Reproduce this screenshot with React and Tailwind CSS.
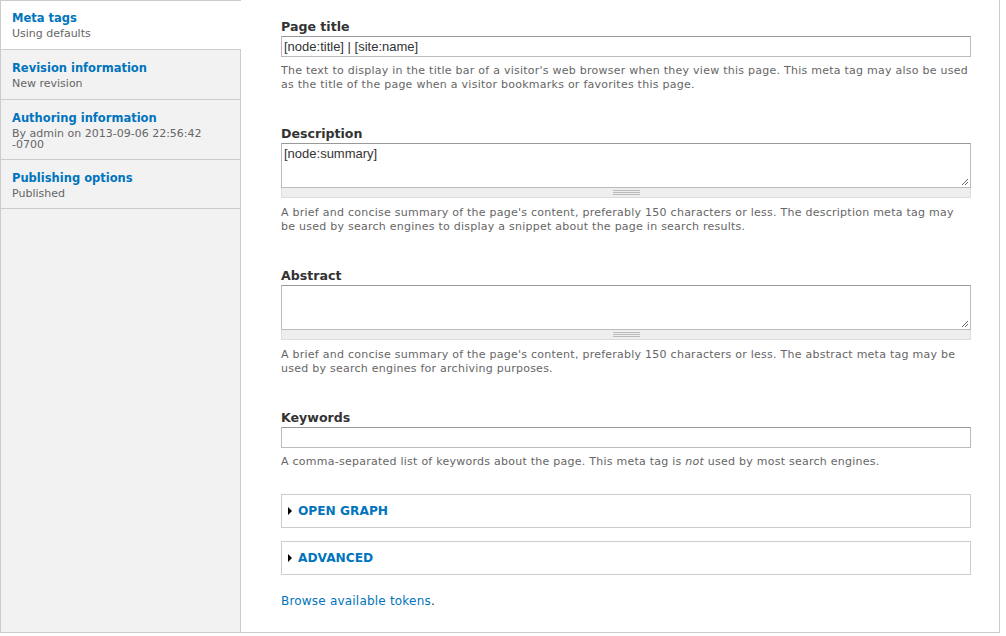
import React from 'react';

const font = { fontFamily: '"DejaVu Sans", Verdana, sans-serif' };

const tabs = [
  { title: 'Meta tags', summary: 'Using defaults', active: true, pad: 'pt-[9px] pb-[10px]' },
  { title: 'Revision information', summary: 'New revision', pad: 'pt-[10px] pb-[10px]' },
  { title: 'Authoring information', summary: 'By admin on 2013-09-06 22:56:42 -0700', pad: 'pt-[10px] pb-[9px]' },
  { title: 'Publishing options', summary: 'Published', pad: 'pt-[10px] pb-[9px]' },
];

function Label({ children }) {
  return <div className="text-[12.6px] leading-[16px] font-bold text-[#333] pt-[1px] mb-[1px]">{children}</div>;
}

function Help({ children, className = 'mt-[7px]' }) {
  return (
    <div className={'text-[11px] leading-[14px] tracking-[0.25px] text-[#666] ' + className}>{children}</div>
  );
}

function TextInput({ value }) {
  return (
    <div className="h-[21px] border border-[#bbb] border-t-[#999] bg-white px-[2px] flex items-center text-[13px] text-[#333] font-['Liberation_Sans',Arial,sans-serif]">
      {value}
    </div>
  );
}

function TextArea({ value }) {
  return (
    <div>
      <div className="relative h-[45px] border border-[#bbb] border-t-[#999] bg-white px-[2px] pt-[2px] text-[13px] leading-[16px] text-[#333] font-['Liberation_Sans',Arial,sans-serif]">
        {value}
        <svg className="absolute right-[1px] bottom-[1px]" width="8" height="8" viewBox="0 0 8 8">
          <path d="M7 1L1 7M7 4L4 7" stroke="#666" strokeWidth="1" />
        </svg>
      </div>
      <div className="h-[10px] bg-[#eee] border border-t-0 border-[#ddd] flex justify-center items-center">
        <div className="w-[27px] flex flex-col gap-[1px]">
          <div className="h-px bg-[#bbb]" />
          <div className="h-px bg-[#bbb]" />
          <div className="h-px bg-[#bbb]" />
        </div>
      </div>
    </div>
  );
}

function Fieldset({ title }) {
  return (
    <div className="h-[34px] border border-[#ccc] flex items-center pl-[6px]">
      <svg width="4" height="8" viewBox="0 0 4 8" className="mr-[6px]">
        <path d="M0 0L4 4L0 8Z" fill="#000" />
      </svg>
      <span className="text-[12.2px] font-bold text-[#0074bd] uppercase">{title}</span>
    </div>
  );
}

export default function App() {
  return (
    <div className="w-[1000px] h-[633px] bg-white flex border-l border-r border-b border-[#ccc]" style={font}>
      <div className="w-[240px] shrink-0 bg-[#f2f2f2] border-r border-t border-[#ccc] flex flex-col">
        {tabs.map((t) => (
          <div
            key={t.title}
            className={
              'pl-[11px] pr-[12px] border-b border-[#ccc] ' + t.pad + ' ' +
              (t.active ? 'bg-white -mr-px' : '')
            }
          >
            <div className="text-[11.5px] leading-[16px] font-bold text-[#0074bd]">{t.title}</div>
            <div className="text-[11px] leading-[11px] text-[#666] mt-[2px]">{t.summary}</div>
          </div>
        ))}
      </div>
      <div className="flex-1 pl-[40px] pr-[28px] pt-[18px]">
        <Label>Page title</Label>
        <TextInput value="[node:title] | [site:name]" />
        <Help>
          The text to display in the title bar of a visitor's web browser when they view this page. This meta tag may also be used as the title of the page when a visitor bookmarks or favorites this page.
        </Help>

        <div className="mt-[33px]">
          <Label>Description</Label>
          <TextArea value="[node:summary]" />
          <Help className="mt-[8px]">
            A brief and concise summary of the page's content, preferably 150 characters or less. The description meta tag may be used by search engines to display a snippet about the page in search results.
          </Help>
        </div>

        <div className="mt-[33px]">
          <Label>Abstract</Label>
          <TextArea value="" />
          <Help className="mt-[8px]">
            A brief and concise summary of the page's content, preferably 150 characters or less. The abstract meta tag may be used by search engines for archiving purposes.
          </Help>
        </div>

        <div className="mt-[33px]">
          <Label>Keywords</Label>
          <TextInput value="" />
          <Help>
            A comma-separated list of keywords about the page. This meta tag is <em>not</em> used by most search engines.
          </Help>
        </div>

        <div className="mt-[25px] flex flex-col gap-[13px]">
          <Fieldset title="Open Graph" />
          <Fieldset title="Advanced" />
        </div>

        <div className="mt-[19px] text-[12px] leading-[14px] tracking-[0.2px]">
          <span className="text-[#0074bd]">Browse available tokens</span>
          <span className="text-[#333]">.</span>
        </div>
      </div>
    </div>
  );
}
